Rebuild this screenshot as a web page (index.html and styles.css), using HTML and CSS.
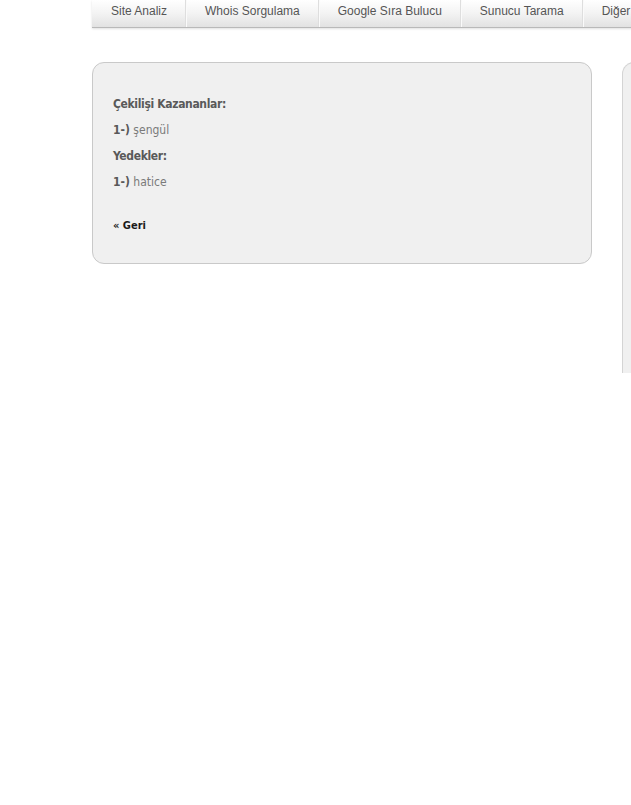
FILE: index.html
```html
<!DOCTYPE html>
<html lang="tr">
<head>
  <meta charset="UTF-8" />
  <meta name="viewport" content="width=device-width, initial-scale=1.0"/>
  <title>Çekiliş Sonuçları</title>

  <link rel="stylesheet" href="styles.css">
</head>

<body>

  <div class="sayfa">

    <ul class="menu">
      <li><a href="#">Site Analiz</a></li>
      <li><a href="#">Whois Sorgulama</a></li>
      <li><a href="#">Google Sıra Bulucu</a></li>
      <li><a href="#">Sunucu Tarama</a></li>
      <li><a href="#">Diğer Araçlar</a></li>
    </ul>

    <div class="icerik">
      <div class="kutu">
        <p class="baslik">Çekilişi Kazananlar:</p>
        <p class="satir"><b>1-)</b> şengül</p>
        <p class="baslik">Yedekler:</p>
        <p class="satir"><b>1-)</b> hatice</p>
        <a class="geri" href="#">« Geri</a>
      </div>

      <div class="yan-kutu"></div>
    </div>

  </div>

</body>
</html>
```

FILE: styles.css
```css
html, body {
  margin: 0;
  padding: 0;
  background: #fff;
  overflow: hidden;
}

.sayfa {
  margin-left: 92px;
  width: 900px;
}

.menu {
  display: flex;
  list-style: none;
  margin: 0;
  padding: 0;
  height: 27px;
  background: linear-gradient(#ffffff, #f3f3f3 50%, #e2e2e2);
  border-bottom: 1px solid #b9b9b9;
  box-shadow: 0 1px 2px rgba(0, 0, 0, 0.12);
}

.menu li {
  border-right: 1px solid #dedede;
  box-shadow: 1px 0 0 #fafafa;
}

.menu a {
  display: block;
  padding: 0 18px 0 19px;
  line-height: 23px;
  font-family: "Liberation Sans", Arial, sans-serif;
  font-size: 12px;
  color: #555;
  text-decoration: none;
}

.icerik {
  display: flex;
  align-items: flex-start;
  gap: 30px;
  margin-top: 34px;
}

.kutu {
  width: 458px;
  padding: 28px 20px 24px;
  background: #f0f0f0;
  border: 1px solid #c9c9c9;
  border-radius: 12px;
  font-family: Tahoma, "DejaVu Sans Condensed", "DejaVu Sans", sans-serif;
  font-size: 12px;
}

.kutu p {
  margin: 0;
  line-height: 26px;
}

.baslik {
  font-weight: bold;
  color: #595959;
  letter-spacing: -0.35px;
}

.satir {
  color: #7a7a7a;
}

.satir b {
  color: #595959;
}

.geri {
  display: block;
  margin-top: 18px;
  line-height: 26px;
  font-size: 11px;
  font-weight: bold;
  color: #1a1a1a;
  text-decoration: none;
}

.yan-kutu {
  width: 300px;
  height: 310px;
  background: #f0f0f0;
  border: 1px solid #d4d4d4;
  border-radius: 12px 12px 0 0;
  border-bottom: none;
}
```
